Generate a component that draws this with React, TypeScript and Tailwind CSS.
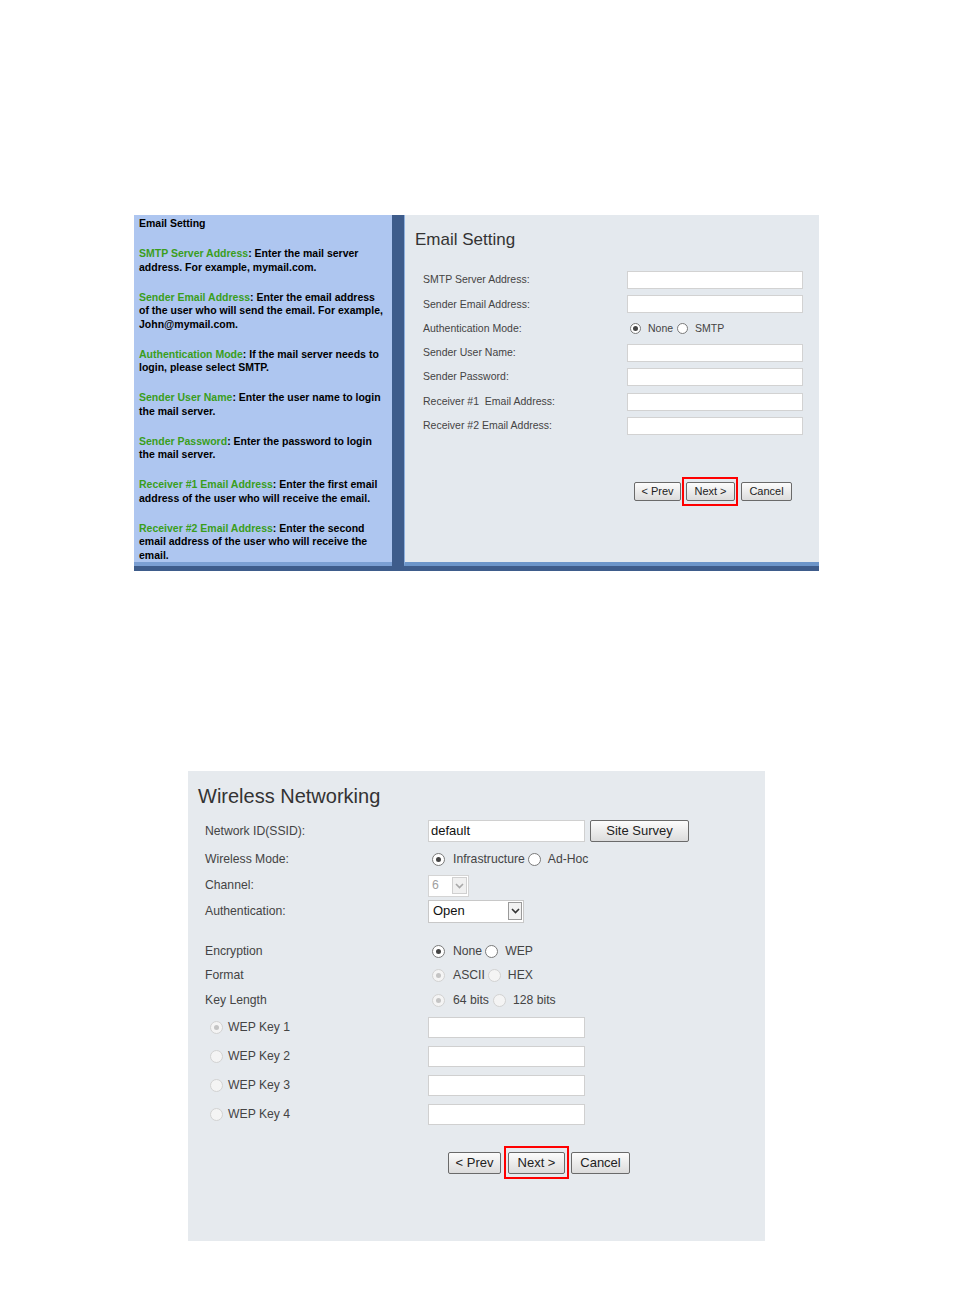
import React from 'react';

const font = "font-['Liberation_Sans',Arial,sans-serif]";

function Radio({
  checked = false,
  disabled = false,
  small = false,
}: {
  checked?: boolean;
  disabled?: boolean;
  small?: boolean;
}) {
  const box = small ? 'w-[11px] h-[11px]' : 'w-[13px] h-[13px]';
  const ring = disabled ? 'border-[#d2d2d2] bg-[#f4f4f4]' : 'border-[#7a7a7a] bg-white';
  const dot = disabled ? 'bg-[#c4c4c4]' : 'bg-[#444]';
  return (
    <span className={`${box} ${ring} shrink-0 rounded-full border flex items-center justify-center`}>
      {checked && <span className={`${dot} w-[5px] h-[5px] rounded-full`} />}
    </span>
  );
}

function Btn({ label, className = '' }: { label: string; className?: string }) {
  return (
    <button
      className={`flex items-center justify-center rounded-[2px] border border-[#6a6a6a] bg-linear-to-b from-[#fcfcfc] to-[#dcdcdc] text-[#222] ${className}`}
    >
      {label}
    </button>
  );
}

function Arrow({ disabled = false }: { disabled?: boolean }) {
  return (
    <svg width="9" height="6" viewBox="0 0 9 6">
      <path d="M1 1 L4.5 4.5 L8 1" fill="none" stroke={disabled ? '#a8a8a8' : '#333'} strokeWidth="1.6" />
    </svg>
  );
}

const help: { term: string; lines: string[] }[] = [
  { term: 'SMTP Server Address', lines: [': Enter the mail server', 'address. For example, mymail.com.'] },
  {
    term: 'Sender Email Address',
    lines: [': Enter the email address', 'of the user who will send the email. For example,', 'John@mymail.com.'],
  },
  { term: 'Authentication Mode', lines: [': If the mail server needs to', 'login, please select SMTP.'] },
  { term: 'Sender User Name', lines: [': Enter the user name to login', 'the mail server.'] },
  { term: 'Sender Password', lines: [': Enter the password to login', 'the mail server.'] },
  {
    term: 'Receiver #1 Email Address',
    lines: [': Enter the first email', 'address of the user who will receive the email.'],
  },
  {
    term: 'Receiver #2 Email Address',
    lines: [': Enter the second', 'email address of the user who will receive the', 'email.'],
  },
];

const emailFields = [
  'SMTP Server Address:',
  'Sender Email Address:',
  'Authentication Mode:',
  'Sender User Name:',
  'Sender Password:',
  'Receiver #1  Email Address:',
  'Receiver #2 Email Address:',
];

function EmailSetting() {
  return (
    <div className={`ml-[134px] flex w-[685px] h-[356px] bg-[#3e5c8b] pb-[5px] ${font}`}>
      {/* help sidebar */}
      <div className="w-[258px] bg-[#aec6f0] border-b-4 border-b-[#7b9fd3] pl-[5px] pt-[2px] text-[10.5px] font-bold leading-[13.5px] text-black">
        <p className="whitespace-nowrap">Email Setting</p>
        {help.map((h) => (
          <p key={h.term} className="mt-[16.5px] whitespace-nowrap">
            <span className="text-[#3a9e1c]">{h.term}</span>
            {h.lines[0]}
            {h.lines.slice(1).map((l) => (
              <React.Fragment key={l}>
                <br />
                {l}
              </React.Fragment>
            ))}
          </p>
        ))}
      </div>
      <div className="w-[12px]" />
      {/* form */}
      <div className="flex-1 bg-[#e4e9ee] border-l border-l-[#8db0dd] border-b-4 border-b-[#6c95c9] pl-[10px] pt-[15px]">
        <h2 className="text-[17px] leading-[20px] text-[#333]">Email Setting</h2>
        <div className="mt-[18px] pl-[8px] text-[10.5px] text-[#444]">
          {emailFields.map((f) => (
            <div key={f} className="flex h-[24.3px] items-center">
              <span className="w-[204px] whitespace-pre">{f}</span>
              {f === 'Authentication Mode:' ? (
                <div className="flex items-center">
                  <span className="ml-[3px]" />
                  <Radio checked small />
                  <span className="ml-[7px]">None</span>
                  <span className="ml-[4px]" />
                  <Radio small />
                  <span className="ml-[7px]">SMTP</span>
                </div>
              ) : (
                <div className="h-[18px] w-[176px] border border-[#d2d2d2] bg-white" />
              )}
            </div>
          ))}
        </div>
        <div className="mt-[39px] flex items-center pl-[219px] text-[11px]">
          <Btn label="< Prev" className="h-[19px] w-[47px]" />
          <div className="ml-[1px] border-2 border-[#ff0000] pl-[2px] pr-[1px] py-[3px]">
            <Btn label="Next >" className="h-[19px] w-[49px]" />
          </div>
          <Btn label="Cancel" className="ml-[3px] h-[19px] w-[51px]" />
        </div>
      </div>
    </div>
  );
}

function WirelessNetworking() {
  const label = 'w-[223px] shrink-0';
  return (
    <div className={`ml-[188px] w-[577px] h-[470px] bg-[#e6eaee] pl-[10px] pt-[13px] text-[12.2px] text-[#444] ${font}`}>
      <h2 className="text-[20px] leading-[24px] text-[#333]">Wireless Networking</h2>
      <div className="mt-[9px] pl-[7px]">
        <div className="flex h-[28px] items-center">
          <span className={label}>Network ID(SSID):</span>
          <div className="flex h-[22px] w-[157px] items-center border border-[#d0d0d0] bg-white pl-[2px] text-[13px] text-[#111]">
            default
          </div>
          <Btn label="Site Survey" className="ml-[5px] h-[22px] w-[99px] text-[13px]" />
        </div>
        <div className="flex h-[29px] items-center">
          <span className={label}>Wireless Mode:</span>
          <span className="ml-[4px]" />
          <Radio checked />
          <span className="ml-[8px]">Infrastructure</span>
          <span className="ml-[3px]" />
          <Radio />
          <span className="ml-[7px]">Ad-Hoc</span>
        </div>
        <div className="flex h-[23px] items-center">
          <span className={label}>Channel:</span>
          <div className="flex h-[22px] w-[41px] items-center justify-between border border-[#d4d4d4] bg-white pl-[3px] pr-[1px] text-[#a0a0a0]">
            6
            <span className="flex h-[17px] w-[15px] items-center justify-center border border-[#d0d0d0] bg-[#f0f0f0]">
              <Arrow disabled />
            </span>
          </div>
        </div>
        <div className="flex h-[28px] items-center">
          <span className={label}>Authentication:</span>
          <div className="flex h-[23px] w-[96px] items-center justify-between border border-[#c8c8c8] bg-white pl-[4px] pr-[1px] text-[13px] text-[#111]">
            Open
            <span className="flex h-[18px] w-[14px] items-center justify-center border border-[#9a9a9a] bg-[#f2f2f2]">
              <Arrow />
            </span>
          </div>
        </div>
        <div className="mt-[14px] flex h-[24px] items-center">
          <span className={label}>Encryption</span>
          <span className="ml-[4px]" />
          <Radio checked />
          <span className="ml-[8px]">None</span>
          <span className="ml-[3px]" />
          <Radio />
          <span className="ml-[7px]">WEP</span>
        </div>
        <div className="flex h-[25px] items-center">
          <span className={label}>Format</span>
          <span className="ml-[4px]" />
          <Radio checked disabled />
          <span className="ml-[8px]">ASCII</span>
          <span className="ml-[3px]" />
          <Radio disabled />
          <span className="ml-[7px]">HEX</span>
        </div>
        <div className="flex h-[25px] items-center">
          <span className={label}>Key Length</span>
          <span className="ml-[4px]" />
          <Radio checked disabled />
          <span className="ml-[8px]">64 bits</span>
          <span className="ml-[4px]" />
          <Radio disabled />
          <span className="ml-[7px]">128 bits</span>
        </div>
        {[1, 2, 3, 4].map((n) => (
          <div key={n} className="flex h-[29px] items-center">
            <span className={`${label} flex items-center pl-[5px]`}>
              <Radio checked={n === 1} disabled />
              <span className="ml-[5px]">WEP Key {n}</span>
            </span>
            <div className="h-[21px] w-[157px] border border-[#d0d0d0] bg-white" />
          </div>
        ))}
      </div>
      <div className="mt-[17px] flex items-center pl-[250px] text-[13px]">
        <Btn label="< Prev" className="h-[22px] w-[53px]" />
        <div className="ml-[3px] border-2 border-[#ff0000] px-[2px] pt-[4px] pb-[3px]">
          <Btn label="Next >" className="h-[22px] w-[57px]" />
        </div>
        <Btn label="Cancel" className="ml-[2px] h-[22px] w-[59px]" />
      </div>
    </div>
  );
}

export default function App() {
  return (
    <div className="min-h-[1314px] w-full bg-white pt-[215px]">
      <EmailSetting />
      <div className="h-[200px]" />
      <WirelessNetworking />
    </div>
  );
}
